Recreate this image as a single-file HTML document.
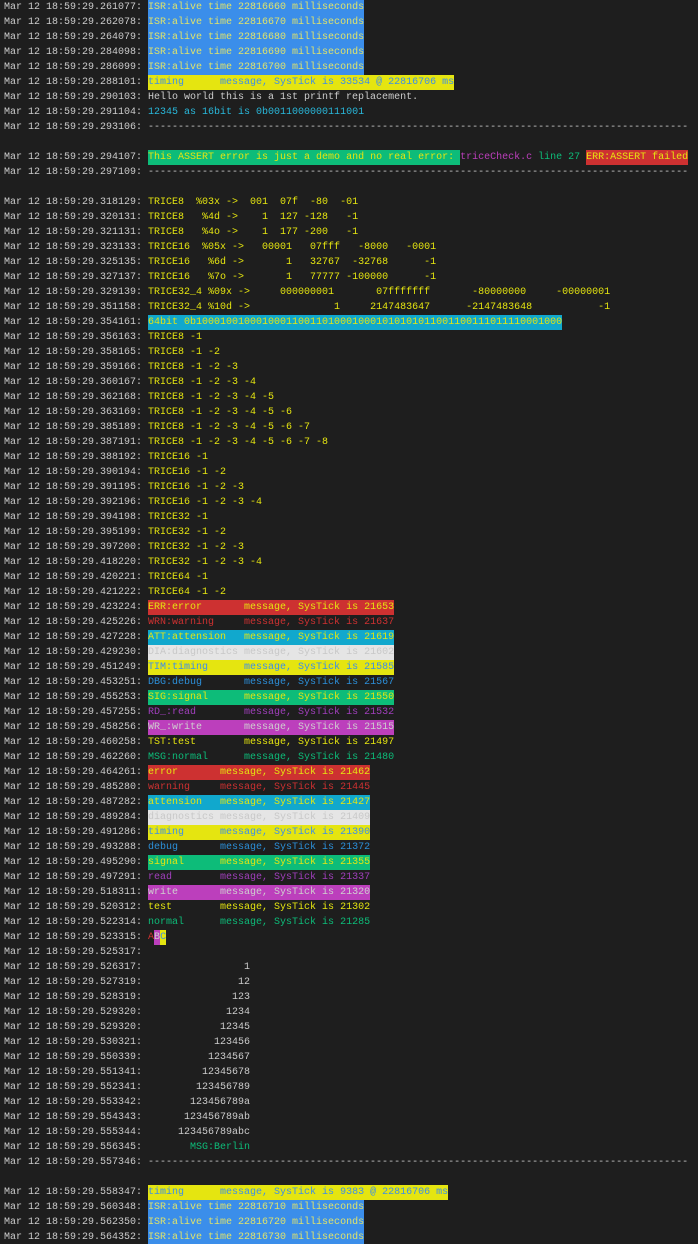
<!DOCTYPE html>
<html><head><meta charset="utf-8"><style>
html,body{margin:0;padding:0;background:#1e1e1e;width:698px;height:1244px;overflow:hidden}
#t{font-family:"Liberation Mono","DejaVu Sans Mono",monospace;font-size:10px;color:#cccccc;padding-left:4px}
#t div{height:15px;line-height:15px;overflow:hidden;width:690px;white-space:pre}
#t span{display:inline-block;height:15px;vertical-align:top}
.y{color:#e5e510}
.isr{background:#3b8eea;color:#e0e36a}
.tim{background:#e5e510;color:#3b8eea}
.cy{color:#29b8db}
.grn{background:#0dbc79;color:#e5e510}
.red{background:#cd3131;color:#e5e510}
.cyb{background:#11a8cd;color:#e5e510}
.wrn{color:#cd3131}
.dia{background:#e5e5e5;color:#c8c8c8}
.dbg{color:#2c8fd8}
.rd{color:#a03fbc}
.wr{background:#bc3fbc;color:#cfcfcf}
.tst{color:#e5e510}
.msg{color:#0dbc79}
.mag{color:#bc3fbc}
.gt{color:#0dbc79}
</style></head><body><div id="t"><div>Mar 12 18:59:29.261077: <span class="isr">ISR:alive time 22816660 milliseconds</span></div><div>Mar 12 18:59:29.262078: <span class="isr">ISR:alive time 22816670 milliseconds</span></div><div>Mar 12 18:59:29.264079: <span class="isr">ISR:alive time 22816680 milliseconds</span></div><div>Mar 12 18:59:29.284098: <span class="isr">ISR:alive time 22816690 milliseconds</span></div><div>Mar 12 18:59:29.286099: <span class="isr">ISR:alive time 22816700 milliseconds</span></div><div>Mar 12 18:59:29.288101: <span class="tim">timing      message, SysTick is 33534 @ 22816706 ms</span></div><div>Mar 12 18:59:29.290103: Hello world this is a 1st printf replacement.</div><div>Mar 12 18:59:29.291104: <span class="cy">12345 as 16bit is 0b0011000000111001</span></div><div>Mar 12 18:59:29.293106: ------------------------------------------------------------------------------------------</div><div></div><div>Mar 12 18:59:29.294107: <span class="grn">This ASSERT error is just a demo and no real error: </span><span class="mag">triceCheck.c</span><span class="gt"> line 27 </span><span class="red">ERR:ASSERT failed</span></div><div>Mar 12 18:59:29.297109: ------------------------------------------------------------------------------------------</div><div></div><div>Mar 12 18:59:29.318129: <span class="y">TRICE8  %03x ->  001  07f  -80  -01</span></div><div>Mar 12 18:59:29.320131: <span class="y">TRICE8   %4d ->    1  127 -128   -1</span></div><div>Mar 12 18:59:29.321131: <span class="y">TRICE8   %4o ->    1  177 -200   -1</span></div><div>Mar 12 18:59:29.323133: <span class="y">TRICE16  %05x ->   00001   07fff   -8000   -0001</span></div><div>Mar 12 18:59:29.325135: <span class="y">TRICE16   %6d ->       1   32767  -32768      -1</span></div><div>Mar 12 18:59:29.327137: <span class="y">TRICE16   %7o ->       1   77777 -100000      -1</span></div><div>Mar 12 18:59:29.329139: <span class="y">TRICE32_4 %09x ->     000000001       07fffffff       -80000000     -00000001</span></div><div>Mar 12 18:59:29.351158: <span class="y">TRICE32_4 %10d ->              1     2147483647      -2147483648           -1</span></div><div>Mar 12 18:59:29.354161: <span class="cyb">64bit 0b1000100100010001100110100010001010101011001100111011110001000</span></div><div>Mar 12 18:59:29.356163: <span class="y">TRICE8 -1</span></div><div>Mar 12 18:59:29.358165: <span class="y">TRICE8 -1 -2</span></div><div>Mar 12 18:59:29.359166: <span class="y">TRICE8 -1 -2 -3</span></div><div>Mar 12 18:59:29.360167: <span class="y">TRICE8 -1 -2 -3 -4</span></div><div>Mar 12 18:59:29.362168: <span class="y">TRICE8 -1 -2 -3 -4 -5</span></div><div>Mar 12 18:59:29.363169: <span class="y">TRICE8 -1 -2 -3 -4 -5 -6</span></div><div>Mar 12 18:59:29.385189: <span class="y">TRICE8 -1 -2 -3 -4 -5 -6 -7</span></div><div>Mar 12 18:59:29.387191: <span class="y">TRICE8 -1 -2 -3 -4 -5 -6 -7 -8</span></div><div>Mar 12 18:59:29.388192: <span class="y">TRICE16 -1</span></div><div>Mar 12 18:59:29.390194: <span class="y">TRICE16 -1 -2</span></div><div>Mar 12 18:59:29.391195: <span class="y">TRICE16 -1 -2 -3</span></div><div>Mar 12 18:59:29.392196: <span class="y">TRICE16 -1 -2 -3 -4</span></div><div>Mar 12 18:59:29.394198: <span class="y">TRICE32 -1</span></div><div>Mar 12 18:59:29.395199: <span class="y">TRICE32 -1 -2</span></div><div>Mar 12 18:59:29.397200: <span class="y">TRICE32 -1 -2 -3</span></div><div>Mar 12 18:59:29.418220: <span class="y">TRICE32 -1 -2 -3 -4</span></div><div>Mar 12 18:59:29.420221: <span class="y">TRICE64 -1</span></div><div>Mar 12 18:59:29.421222: <span class="y">TRICE64 -1 -2</span></div><div>Mar 12 18:59:29.423224: <span class="red">ERR:error       message, SysTick is 21653</span></div><div>Mar 12 18:59:29.425226: <span class="wrn">WRN:warning     message, SysTick is 21637</span></div><div>Mar 12 18:59:29.427228: <span class="cyb">ATT:attension   message, SysTick is 21619</span></div><div>Mar 12 18:59:29.429230: <span class="dia">DIA:diagnostics message, SysTick is 21602</span></div><div>Mar 12 18:59:29.451249: <span class="tim">TIM:timing      message, SysTick is 21585</span></div><div>Mar 12 18:59:29.453251: <span class="dbg">DBG:debug       message, SysTick is 21567</span></div><div>Mar 12 18:59:29.455253: <span class="grn">SIG:signal      message, SysTick is 21550</span></div><div>Mar 12 18:59:29.457255: <span class="rd">RD_:read        message, SysTick is 21532</span></div><div>Mar 12 18:59:29.458256: <span class="wr">WR_:write       message, SysTick is 21515</span></div><div>Mar 12 18:59:29.460258: <span class="tst">TST:test        message, SysTick is 21497</span></div><div>Mar 12 18:59:29.462260: <span class="msg">MSG:normal      message, SysTick is 21480</span></div><div>Mar 12 18:59:29.464261: <span class="red">error       message, SysTick is 21462</span></div><div>Mar 12 18:59:29.485280: <span class="wrn">warning     message, SysTick is 21445</span></div><div>Mar 12 18:59:29.487282: <span class="cyb">attension   message, SysTick is 21427</span></div><div>Mar 12 18:59:29.489284: <span class="dia">diagnostics message, SysTick is 21409</span></div><div>Mar 12 18:59:29.491286: <span class="tim">timing      message, SysTick is 21390</span></div><div>Mar 12 18:59:29.493288: <span class="dbg">debug       message, SysTick is 21372</span></div><div>Mar 12 18:59:29.495290: <span class="grn">signal      message, SysTick is 21355</span></div><div>Mar 12 18:59:29.497291: <span class="rd">read        message, SysTick is 21337</span></div><div>Mar 12 18:59:29.518311: <span class="wr">write       message, SysTick is 21320</span></div><div>Mar 12 18:59:29.520312: <span class="tst">test        message, SysTick is 21302</span></div><div>Mar 12 18:59:29.522314: <span class="msg">normal      message, SysTick is 21285</span></div><div>Mar 12 18:59:29.523315: <span class="wrn">A</span><span class="wr">B</span><span class="tim">C</span></div><div>Mar 12 18:59:29.525317:</div><div>Mar 12 18:59:29.526317:                 1</div><div>Mar 12 18:59:29.527319:                12</div><div>Mar 12 18:59:29.528319:               123</div><div>Mar 12 18:59:29.529320:              1234</div><div>Mar 12 18:59:29.529320:             12345</div><div>Mar 12 18:59:29.530321:            123456</div><div>Mar 12 18:59:29.550339:           1234567</div><div>Mar 12 18:59:29.551341:          12345678</div><div>Mar 12 18:59:29.552341:         123456789</div><div>Mar 12 18:59:29.553342:        123456789a</div><div>Mar 12 18:59:29.554343:       123456789ab</div><div>Mar 12 18:59:29.555344:      123456789abc</div><div>Mar 12 18:59:29.556345:        <span class="msg">MSG:Berlin</span></div><div>Mar 12 18:59:29.557346: ------------------------------------------------------------------------------------------</div><div></div><div>Mar 12 18:59:29.558347: <span class="tim">timing      message, SysTick is 9383 @ 22816706 ms</span></div><div>Mar 12 18:59:29.560348: <span class="isr">ISR:alive time 22816710 milliseconds</span></div><div>Mar 12 18:59:29.562350: <span class="isr">ISR:alive time 22816720 milliseconds</span></div><div>Mar 12 18:59:29.564352: <span class="isr">ISR:alive time 22816730 milliseconds</span></div></div></body></html>
